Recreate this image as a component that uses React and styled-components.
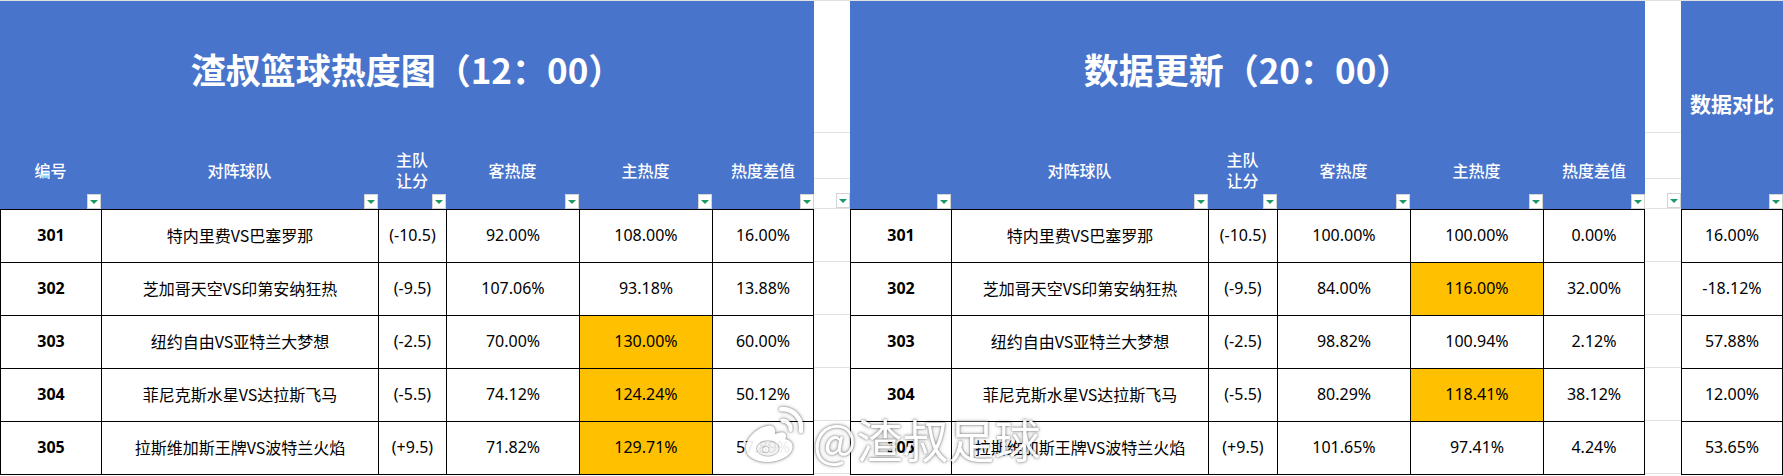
import React from 'react';
import styled, { createGlobalStyle } from 'styled-components';

const GlobalStyle = createGlobalStyle`
  html, body {
    margin: 0;
    padding: 0;
    background: #fff;
  }
  body {
    font-family: "Noto Sans", "Noto Sans CJK SC", sans-serif;
    color: #000;
  }
`;

// column widths taken from the sheet
const COLS_LEFT = [101, 277, 68, 133, 133, 102];
const COLS_RIGHT = [101, 257, 69, 133, 133, 102];

const BLUE = '#4874cb';
const GRID = '#e1e1e1';

const Sheet = styled.div`
  position: relative;
  display: flex;
  width: 1783px;
  border-top: 1px solid ${GRID};
`;

const Block = styled.div`
  display: flex;
  flex-direction: column;
  width: ${(p) => p.$width}px;
  flex-shrink: 0;
`;

const Header = styled.div`
  display: flex;
  flex-direction: column;
  height: 208px;
  background: ${BLUE};
  color: #fff;
`;

const Title = styled.div`
  height: 132px;
  display: flex;
  align-items: center;
  justify-content: center;
  font-family: "Noto Sans CJK SC", sans-serif;
  font-size: 35px;
  font-weight: 700;
  padding-top: 2px;
  box-sizing: border-box;
`;

const LabelRow = styled.div`
  display: grid;
  grid-template-columns: ${(p) => p.$cols.map((c) => `${c}px`).join(' ')};
  flex: 1;
`;

const LabelCell = styled.div`
  position: relative;
  display: flex;
  align-items: center;
  justify-content: center;
  text-align: center;
  font-family: "Noto Sans CJK SC", sans-serif;
  font-size: 16px;
  font-weight: 500;
  line-height: 21px;
  padding-bottom: 2px;
`;

const Filter = styled.span`
  position: absolute;
  right: 0;
  bottom: 0;
  width: 14px;
  height: 15px;
  box-sizing: border-box;
  background: #fff;
  border: 1px solid #d4d4d4;
  display: flex;
  align-items: center;
  justify-content: center;

  &::after {
    content: '';
    width: 0;
    height: 0;
    border-left: 4px solid transparent;
    border-right: 4px solid transparent;
    border-top: 4px solid #1d9a64;
  }
`;

const Body = styled.div`
  border-top: 1px solid #000;
`;

const Row = styled.div`
  display: grid;
  grid-template-columns: ${(p) => p.$cols.map((c) => `${c}px`).join(' ')};
  height: 53px;
`;

const Cell = styled.div`
  box-sizing: border-box;
  display: flex;
  align-items: center;
  justify-content: center;
  border-left: 1px solid #000;
  border-bottom: 1px solid #000;
  border-right: ${(p) => (p.$last ? '1px solid #000' : 'none')};
  background: ${(p) => (p.$hot ? '#ffc000' : '#fff')};
  font-size: 16px;
  font-weight: ${(p) => (p.$bold ? 700 : 400)};
  white-space: nowrap;
  padding-bottom: 2px;
`;

const TeamText = styled.span`
  font-family: "Noto Sans CJK SC", sans-serif;
`;

const GapCell = styled.div`
  position: relative;
  box-sizing: border-box;
  height: ${(p) => p.$h}px;
  border-bottom: 1px solid ${GRID};
  background: #fff;
`;

const CompareTitle = styled.div`
  flex: 1;
  position: relative;
  display: flex;
  align-items: center;
  justify-content: center;
  font-family: "Noto Sans CJK SC", sans-serif;
  font-size: 21px;
  font-weight: 700;
  padding-bottom: 4px;
`;

const Watermark = styled.div`
  position: absolute;
  left: 743px;
  top: 402px;
  display: flex;
  align-items: center;
  gap: 10px;
  color: #fff;
  opacity: 0.92;
  filter: drop-shadow(0 0 1px rgba(0, 0, 0, 0.55)) drop-shadow(0 0 2px rgba(0, 0, 0, 0.25));
  pointer-events: none;
`;

const WatermarkText = styled.span`
  font-family: "Noto Sans CJK SC", sans-serif;
  font-size: 46px;
  font-weight: 400;
  line-height: 1;
  margin-top: 8px;
`;

const leftRows = [
  ['301', '特内里费VS巴塞罗那', '(-10.5)', '92.00%', '108.00%', '16.00%', false],
  ['302', '芝加哥天空VS印第安纳狂热', '(-9.5)', '107.06%', '93.18%', '13.88%', false],
  ['303', '纽约自由VS亚特兰大梦想', '(-2.5)', '70.00%', '130.00%', '60.00%', true],
  ['304', '菲尼克斯水星VS达拉斯飞马', '(-5.5)', '74.12%', '124.24%', '50.12%', true],
  ['305', '拉斯维加斯王牌VS波特兰火焰', '(+9.5)', '71.82%', '129.71%', '57.89%', true],
];

const rightRows = [
  ['301', '特内里费VS巴塞罗那', '(-10.5)', '100.00%', '100.00%', '0.00%', false],
  ['302', '芝加哥天空VS印第安纳狂热', '(-9.5)', '84.00%', '116.00%', '32.00%', true],
  ['303', '纽约自由VS亚特兰大梦想', '(-2.5)', '98.82%', '100.94%', '2.12%', false],
  ['304', '菲尼克斯水星VS达拉斯飞马', '(-5.5)', '80.29%', '118.41%', '38.12%', true],
  ['305', '拉斯维加斯王牌VS波特兰火焰', '(+9.5)', '101.65%', '97.41%', '4.24%', false],
];

const compareRows = ['16.00%', '-18.12%', '57.88%', '12.00%', '53.65%'];

const HeatTable = ({ title, cols, rows, showId }) => {
  const labels = [showId ? '编号' : '', '对阵球队', '主队\n让分', '客热度', '主热度', '热度差值'];
  return (
    <Block $width={cols.reduce((a, b) => a + b, 0)}>
      <Header>
        <Title>{title}</Title>
        <LabelRow $cols={cols}>
          {labels.map((l, i) => (
            <LabelCell key={i}>
              {l.split('\n').map((line, j) => (
                <React.Fragment key={j}>
                  {j > 0 && <br />}
                  {line}
                </React.Fragment>
              ))}
              <Filter />
            </LabelCell>
          ))}
        </LabelRow>
      </Header>
      <Body>
        {rows.map(([id, match, spread, away, home, diff, hot]) => (
          <Row key={id} $cols={cols}>
            <Cell $bold>{id}</Cell>
            <Cell><TeamText>{match}</TeamText></Cell>
            <Cell>{spread}</Cell>
            <Cell>{away}</Cell>
            <Cell $hot={hot}>{home}</Cell>
            <Cell $last>{diff}</Cell>
          </Row>
        ))}
      </Body>
    </Block>
  );
};

const GapColumn = () => (
  <Block $width={36}>
    <GapCell $h={132} />
    <GapCell $h={46} />
    <GapCell $h={30}>
      <Filter />
    </GapCell>
    {compareRows.map((_, i) => (
      <GapCell key={i} $h={53} />
    ))}
  </Block>
);

const WeiboLogo = () => (
  <svg width="60" height="62" viewBox="0 0 58 60" fill="none">
    <path
      d="M24 22c-8 1-19 9-21 19-2 10 8 16 20 16 14 0 25-7 25-15 0-5-5-7-7-7 2-5-1-8-7-6l-3 1c1-5-2-9-7-8z"
      fill="currentColor"
    />
    <ellipse cx="24" cy="44" rx="11" ry="7.5" fill="#f2f2f2" stroke="rgba(0,0,0,0.3)" strokeWidth="0.8" />
    <circle cx="22" cy="45" r="3.2" fill="currentColor" stroke="rgba(0,0,0,0.3)" strokeWidth="0.8" />
    <path d="M38 17a8 8 0 0 1 8 9" stroke="currentColor" strokeWidth="4" strokeLinecap="round" />
    <path d="M37 6a18 18 0 0 1 19 21" stroke="currentColor" strokeWidth="4.5" strokeLinecap="round" />
  </svg>
);

export default function App() {
  return (
    <>
      <GlobalStyle />
      <Sheet>
        <HeatTable title="渣叔篮球热度图（12：00）" cols={COLS_LEFT} rows={leftRows} showId />
        <GapColumn />
        <HeatTable title="数据更新（20：00）" cols={COLS_RIGHT} rows={rightRows} showId={false} />
        <GapColumn />
        <Block $width={102}>
          <Header>
            <CompareTitle>
              数据对比
              <Filter />
            </CompareTitle>
          </Header>
          <Body>
            {compareRows.map((v) => (
              <Row key={v} $cols={[102]}>
                <Cell $last>{v}</Cell>
              </Row>
            ))}
          </Body>
        </Block>
        <Watermark>
          <WeiboLogo />
          <WatermarkText>@渣叔足球</WatermarkText>
        </Watermark>
      </Sheet>
    </>
  );
}
